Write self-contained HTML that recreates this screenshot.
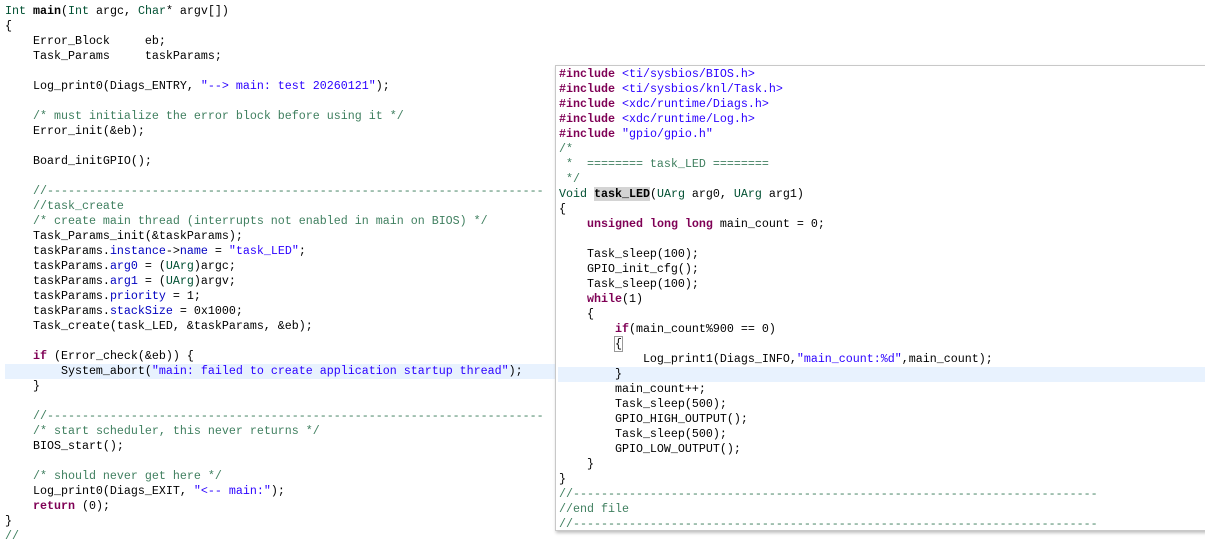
<!DOCTYPE html>
<html><head><meta charset="utf-8"><style>
body{margin:0;width:1205px;height:535px;overflow:hidden;background:#fff;position:relative;font-family:"Liberation Mono",monospace;font-size:11.67px;color:#000}
pre{margin:0;font:inherit;line-height:15px;white-space:pre}
#L{position:absolute;left:5px;top:4px}
#R{position:absolute;left:555px;top:65px;width:660px;height:464px;border:1px solid #c8c8c8;background:#fff;box-shadow:1px 2px 3px rgba(0,0,0,.25);overflow:hidden}
#R pre{position:absolute;left:3px;top:1px}
.k{color:#7f0055;font-weight:bold}
.s{color:#2a00ff}
.c{color:#3f7f5f}
.f{color:#0000c0}
.t{color:#005032}
.b{font-weight:bold}
.hl{position:absolute;background:#e8f2fe}
</style></head><body>
<div class="hl" style="left:5px;top:364px;width:550px;height:15px"></div>
<pre id="L"><span class="t">Int</span> <span class="b">main</span>(<span class="t">Int</span> argc, <span class="t">Char</span>* argv[])
{
    Error_Block     eb;
    Task_Params     taskParams;

    Log_print0(Diags_ENTRY, <span class="s">"--&gt; main: test 20260121"</span>);

    <span class="c">/* must initialize the error block before using it */</span>
    Error_init(&amp;eb);

    Board_initGPIO();

    <span class="c">//-----------------------------------------------------------------------</span>
    <span class="c">//task_create</span>
    <span class="c">/* create main thread (interrupts not enabled in main on BIOS) */</span>
    Task_Params_init(&amp;taskParams);
    taskParams.<span class="f">instance</span>-&gt;<span class="f">name</span> = <span class="s">"task_LED"</span>;
    taskParams.<span class="f">arg0</span> = (<span class="t">UArg</span>)argc;
    taskParams.<span class="f">arg1</span> = (<span class="t">UArg</span>)argv;
    taskParams.<span class="f">priority</span> = 1;
    taskParams.<span class="f">stackSize</span> = 0x1000;
    Task_create(task_LED, &amp;taskParams, &amp;eb);

    <span class="k">if</span> (Error_check(&amp;eb)) {
        System_abort(<span class="s">"main: failed to create application startup thread"</span>);
    }

    <span class="c">//-----------------------------------------------------------------------</span>
    <span class="c">/* start scheduler, this never returns */</span>
    BIOS_start();

    <span class="c">/* should never get here */</span>
    Log_print0(Diags_EXIT, <span class="s">"&lt;-- main:"</span>);
    <span class="k">return</span> (0);
}
<span class="c">//</span></pre>
<div id="R">
<div class="hl" style="left:2px;top:301px;width:660px;height:15px"></div>
<pre><span class="k">#include</span> <span class="s">&lt;ti/sysbios/BIOS.h&gt;</span>
<span class="k">#include</span> <span class="s">&lt;ti/sysbios/knl/Task.h&gt;</span>
<span class="k">#include</span> <span class="s">&lt;xdc/runtime/Diags.h&gt;</span>
<span class="k">#include</span> <span class="s">&lt;xdc/runtime/Log.h&gt;</span>
<span class="k">#include</span> <span class="s">"gpio/gpio.h"</span>
<span class="c">/*</span>
<span class="c"> *  ======== task_LED ========</span>
<span class="c"> */</span>
<span class="t">Void</span> <span class="b" style="background:#d4d4d4">task_LED</span>(<span class="t">UArg</span> arg0, <span class="t">UArg</span> arg1)
{
    <span class="k">unsigned</span> <span class="k">long</span> <span class="k">long</span> main_count = 0;

    Task_sleep(100);
    GPIO_init_cfg();
    Task_sleep(100);
    <span class="k">while</span>(1)
    {
        <span class="k">if</span>(main_count%900 == 0)
        <span style="outline:1px solid #999">{</span>
            Log_print1(Diags_INFO,<span class="s">"main_count:%d"</span>,main_count);
        }
        main_count++;
        Task_sleep(500);
        GPIO_HIGH_OUTPUT();
        Task_sleep(500);
        GPIO_LOW_OUTPUT();
    }
}
<span class="c">//---------------------------------------------------------------------------</span>
<span class="c">//end file</span>
<span class="c">//---------------------------------------------------------------------------</span></pre>
</div>
</body></html>
